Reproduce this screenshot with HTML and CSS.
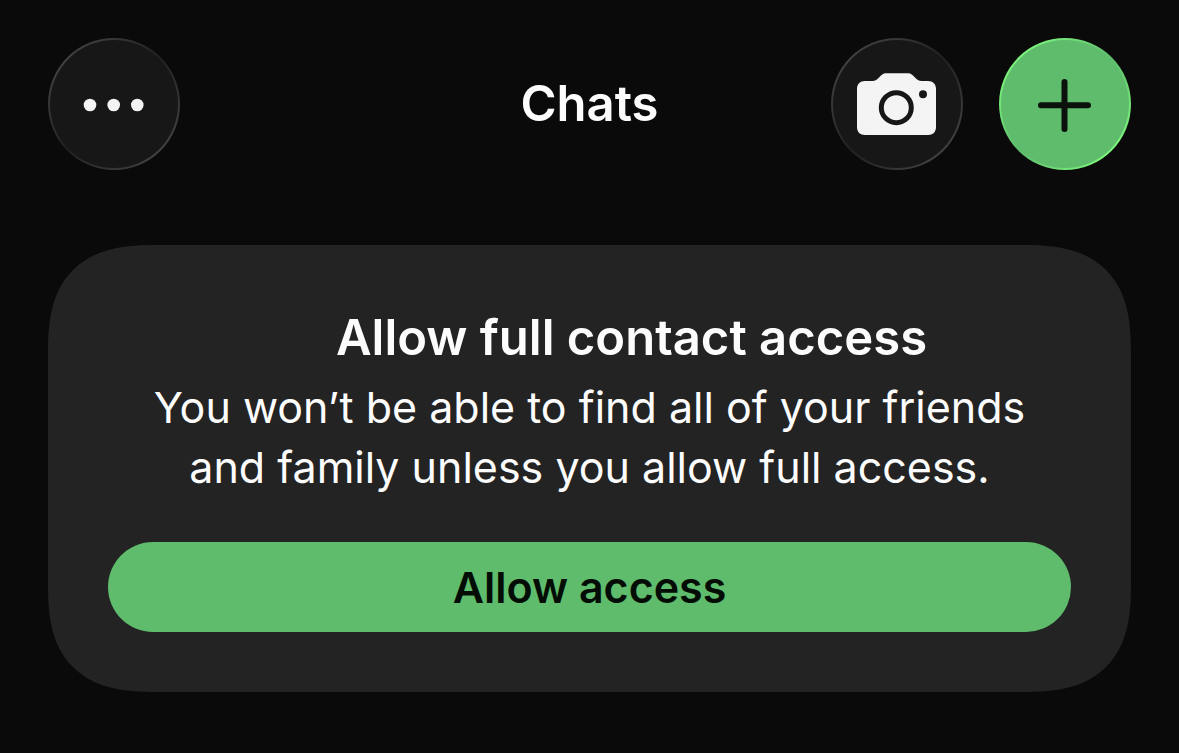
FILE: index.html
```html
<!DOCTYPE html>
<html lang="en">
<head>
    <meta charset="UTF-8">
    <meta name="viewport" content="width=device-width, initial-scale=1.0">
    <title>Chats</title>
    <link rel="stylesheet" href="styles.css">
</head>
<body>
    <header class="topbar">
        <button class="round-btn" aria-label="More options">
            <svg width="132" height="132" viewBox="0 0 132 132" fill="#f4f4f4">
                <circle cx="42" cy="67" r="6.3"/>
                <circle cx="65.7" cy="67" r="6.3"/>
                <circle cx="89.3" cy="67" r="6.3"/>
            </svg>
        </button>
        <h1 class="title">Chats</h1>
        <div class="actions">
            <button class="round-btn" aria-label="Camera">
                <svg width="132" height="132" viewBox="0 0 132 132">
                    <path fill="#f4f4f4" d="M34 43h7.500c2.500 0 4-.8 5.500-2.400l3-3c1.700-1.700 3.200-2.300 5.500-2.300h21c2.300 0 3.800.6 5.500 2.300l3 3C86.500 42.200 88 43 90.500 43H97c5 0 8 3 8 8v38c0 5-3 8-8 8H34c-5 0-8-3-8-8V51c0-5 3-8 8-8z"/>
                    <circle cx="65.300" cy="69.700" r="15" fill="none" stroke="#171717" stroke-width="5"/>
                    <circle cx="92" cy="56.300" r="4" fill="#171717"/>
                </svg>
            </button>
            <button class="round-btn accent" aria-label="New chat">
                <svg width="132" height="132" viewBox="0 0 132 132" fill="none" stroke="#0a120b" stroke-width="6" stroke-linecap="round">
                    <path d="M65.500 44v47M42 67.300h47"/>
                </svg>
            </button>
        </div>
    </header>

    <main class="card">
        <h2 class="card-title">Allow full contact access</h2>
        <p class="card-text">You won’t be able to find all of your friends and family unless you allow full access.</p>
        <button class="allow-btn">Allow access</button>
    </main>
</body>
</html>
```

FILE: styles.css
```css
* {
    margin: 0;
    padding: 0;
    box-sizing: border-box;
    font-family: 'Inter', sans-serif;
}

body {
    min-height: 100vh;
    padding: 38px 48px;
    background: #0a0a0a;
    color: #fcfcfc;
}

button {
    border: none;
    cursor: pointer;
}

.topbar {
    display: grid;
    grid-template-columns: 1fr auto 1fr;
    align-items: center;
    margin-bottom: 75px;
}

.title {
    font-size: 49px;
    line-height: 60px;
    font-weight: 600;
}

.actions {
    display: flex;
    justify-content: flex-end;
    gap: 36px;
}

/* glassy rim: lit at top left and bottom right */
.round-btn {
    display: flex;
    align-items: center;
    justify-content: center;
    width: 132px;
    height: 132px;
    border: 2px solid transparent;
    border-radius: 50%;
    background:
        linear-gradient(#171717, #171717) padding-box,
        linear-gradient(135deg, #404040 15%, #202020 50%, #404040 85%) border-box;
}

.round-btn svg {
    flex: none;
}

.round-btn.accent {
    background:
        linear-gradient(#5ebc6c, #5ebc6c) padding-box,
        linear-gradient(135deg, #7cf47c 15%, #5ebc6c 50%, #7cf47c 85%) border-box;
}

.card {
    padding: 60px;
    border-radius: 80px;
    background: #232323;
    text-align: center;
}

.card-title {
    margin-bottom: 6px;
    padding-left: 84px;
    font-size: 49px;
    line-height: 66px;
    font-weight: 600;
}

.card-text {
    margin-bottom: 45px;
    padding: 0 36px;
    font-size: 43px;
    line-height: 60px;
}

.allow-btn {
    width: 100%;
    height: 90px;
    border-radius: 45px;
    background: #5ebc6c;
    color: #040d05;
    font-size: 43px;
    font-weight: 600;
}

/* smoother corners where the browser can draw them */
@supports (corner-shape: squircle) {
    .card {
        border-radius: 108px;
        corner-shape: superellipse(1.4);
    }
}
```
